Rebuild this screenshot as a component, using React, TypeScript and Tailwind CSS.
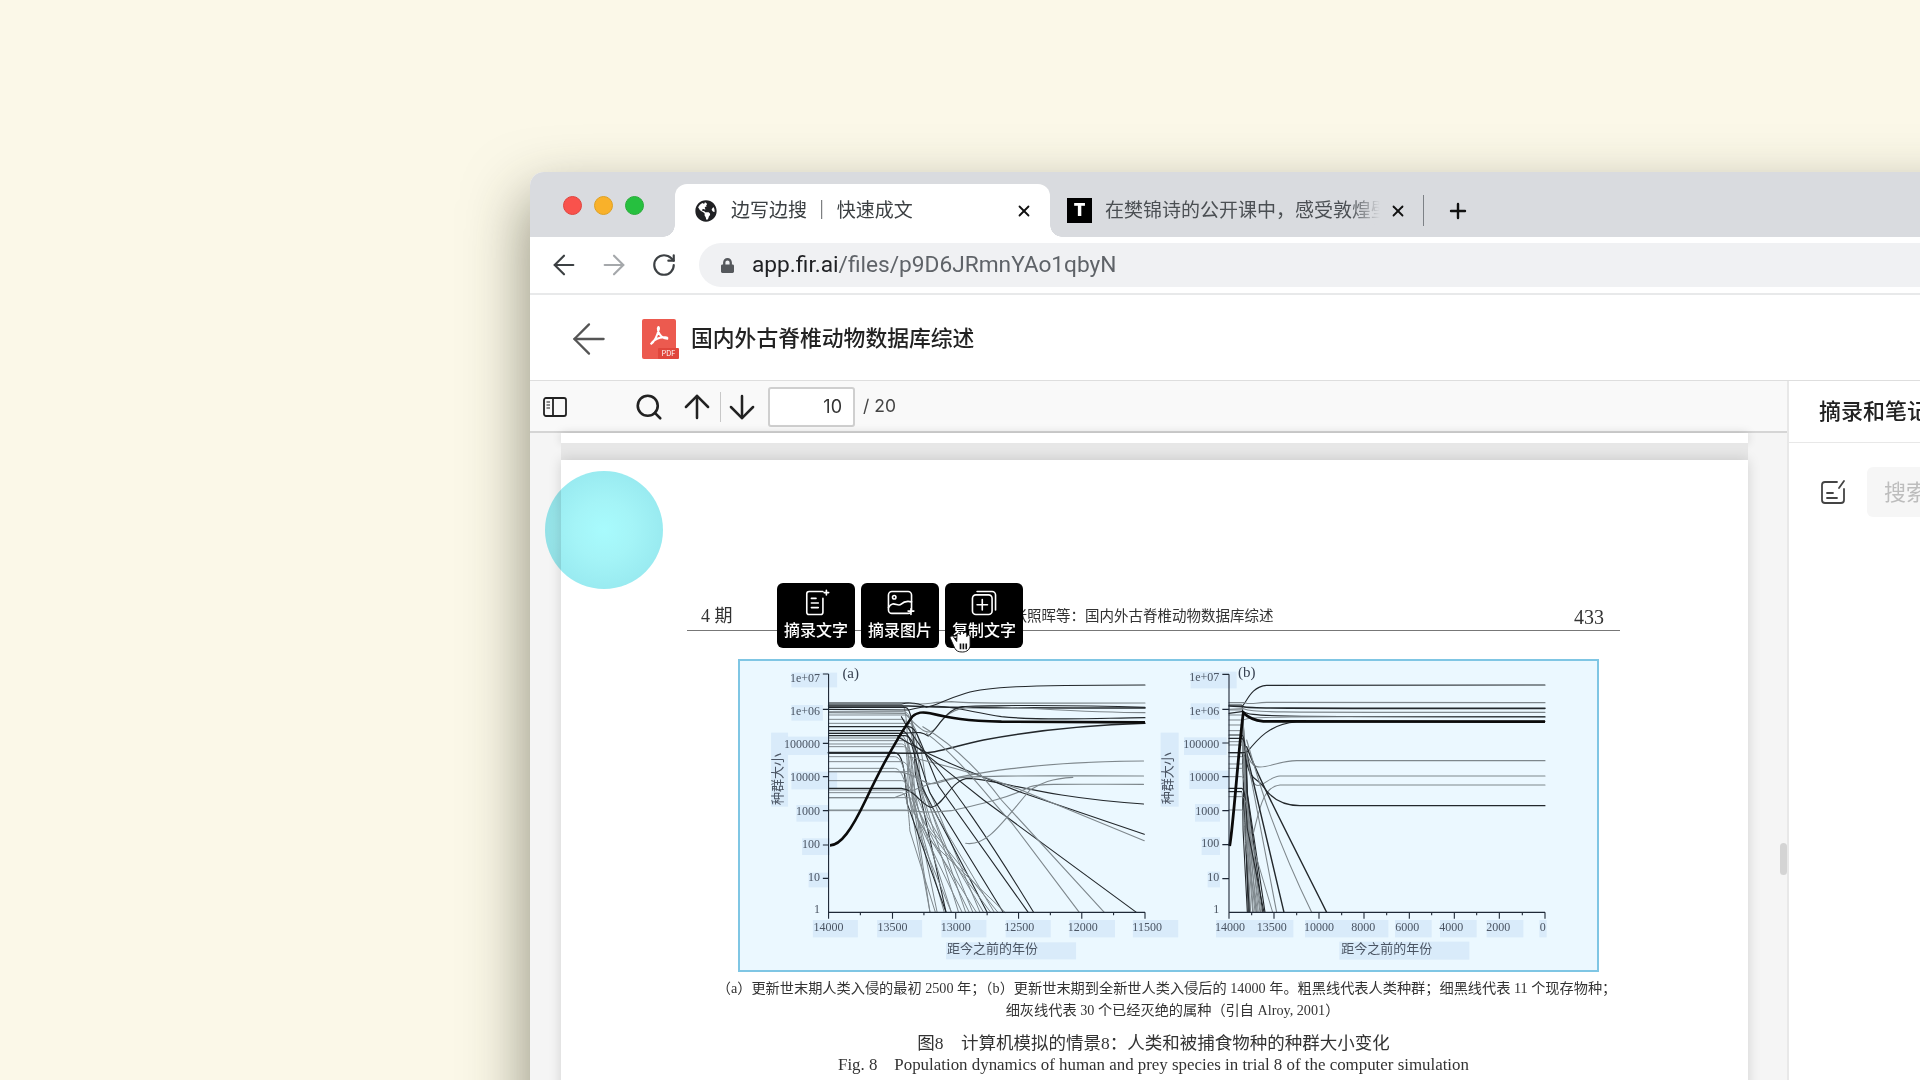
import { ArrowDown, ArrowLeft, ArrowRight, ArrowUp, Plus, RotateCw, Search, X } from "lucide-react";
import { FaGlobeAmericas, FaLock } from "react-icons/fa";

const serif = "font-['Liberation_Serif','Noto_Sans_CJK_SC',serif]";

// chart curves are written in the coordinates of the crop they were read from
const extinct = (y: number, xs: number, xe: number, base: number, bottom: number) => {
  const run = xe - xs;
  return `M${base} ${y} L${xs} ${y} C${xs + Math.min(22, run * 0.15)} ${y} ${xs + Math.min(30, run * 0.2)} ${y + 40} ${xs + run * 0.25} ${y + (bottom - y) * 0.32} L${xe} ${bottom}`;
};

const panelALines: { d: string; dark?: boolean; w?: number }[] = [
  { d: "M416 398 L640 398 C680 410 700 395 760 395 C800 400 900 400 1302 399" },
  { d: "M416 402 L620 402 C650 395 670 400 690 412 C720 405 740 390 800 370 C860 350 950 346 1302 345", dark: true },
  { d: "M416 408 L640 408 C720 412 780 414 1302 414", dark: true, w: 1.6 },
  { d: "M416 418 L640 420 C720 395 760 415 900 440 C1000 452 1150 445 1302 443", dark: true },
  { d: "M416 428 L630 430 C680 490 700 500 720 470 C740 440 760 415 820 410 C900 405 1100 428 1302 428" },
  { d: "M416 490 L610 490 C660 490 670 480 695 498 C720 480 740 420 790 410 C840 405 1100 405 1302 412", dark: true },
  { d: "M416 548 L650 550 C720 552 760 530 850 510 C1000 480 1150 465 1302 460", dark: true, w: 1.5 },
  { d: "M416 548 L600 548", dark: true, w: 2 },
  { d: "M416 605 L600 605 C660 605 680 650 720 640 C800 610 1000 575 1298 573" },
  { d: "M416 655 L620 655 C660 660 680 712 705 712 C740 705 760 625 810 625 C900 630 1000 680 1298 702", dark: true },
  { d: "M416 683 L600 683 C660 660 690 640 760 625 C850 615 1000 618 1298 618" },
  { d: "M416 720 L630 720 C670 725 690 730 760 722 C850 700 930 680 980 650 C1010 640 1100 643 1298 643" },
  { d: "M610 500 C700 560 800 600 950 665 L1300 793", dark: true },
  { d: "M640 560 C760 590 860 620 960 662 L1300 812" },
  { d: "M650 520 C720 580 780 630 850 690 L1278 1027", dark: true },
  { d: "M680 470 C760 520 830 590 900 690 L1188 1027" },
  { d: "M690 490 C780 560 860 680 930 760 L1118 1027" },
  { d: "M620 440 C680 560 760 620 990 1027", dark: true },
  { d: "M800 820 C860 830 900 760 980 660 C1010 640 1040 625 1100 622" },
];

const panelAFalls: [number, number, number, boolean?][] = [
  [405, 620, 700], [412, 630, 745, true], [425, 625, 780], [435, 630, 800], [448, 620, 820], [460, 640, 840],
  [482, 620, 860, true], [490, 610, 880], [497, 630, 905, true], [504, 620, 700], [512, 630, 720], [522, 620, 740],
  [530, 625, 760], [548, 600, 745, true], [560, 600, 790], [575, 620, 810], [595, 600, 830], [605, 640, 850],
  [632, 620, 870], [660, 640, 890], [668, 620, 715], [683, 640, 760], [722, 640, 910], [470, 640, 975, true],
];

const panelBLines: { d: string; dark?: boolean; w?: number }[] = [
  { d: "M335 200 C350 190 360 140 410 136 L1245 135", dark: true },
  { d: "M297 188 L345 188 C360 195 375 188 410 187 L1245 188" },
  { d: "M297 198 L340 200 C360 205 380 205 1245 205", dark: true, w: 1.6 },
  { d: "M297 208 L340 206 C370 218 400 217 1245 217" },
  { d: "M297 220 L340 214 C360 230 390 230 1245 230", dark: true },
  { d: "M340 240 C360 230 400 228 1245 232" },
  { d: "M297 338 L350 338 C380 300 420 250 500 246 L1245 244", dark: true },
  { d: "M350 335 C370 420 420 362 500 362 L1245 362" },
  { d: "M350 350 C370 500 400 410 450 408 L1245 408" },
  { d: "M370 580 C390 500 400 440 450 435 L1245 435" },
  { d: "M345 345 C360 430 380 410 400 440 C420 470 450 497 510 497 L1245 497", dark: true },
  { d: "M350 320 C380 400 430 500 590 817", dark: true, w: 1.4 },
  { d: "M350 300 C380 400 420 560 545 817" },
  { d: "M345 320 L462 817", dark: true, w: 1.4 },
  { d: "M345 320 L440 817" },
];

const panelBFalls: [number, number, number, boolean?][] = [
  [195, 335, 355, true], [210, 335, 362], [225, 335, 370], [240, 335, 378], [255, 335, 385], [272, 335, 392],
  [285, 335, 398, true], [295, 335, 405, true], [305, 335, 360], [315, 335, 368], [338, 335, 358, true], [350, 335, 375],
  [372, 335, 382], [385, 335, 390], [410, 335, 396], [445, 335, 402, true], [455, 335, 352, true], [470, 335, 428], [510, 335, 380],
];

const ax = (x: number) => x / 2.8 - 58;
const ay = (y: number) => y / 3 - 89;
const bx = (x: number) => x / 3 + 392;
const by = (y: number) => y / 3 - 19;

type Label = { t: string; x: number; y: number; r: [number, number, number, number]; end?: boolean };

const panelALabels: Label[] = [
  { t: "1e+07", x: 392, y: 325, r: [312, 308, 440, 352], end: true },
  { t: "1e+06", x: 392, y: 422, r: [312, 405, 400, 452], end: true },
  { t: "100000", x: 392, y: 522, r: [296, 500, 415, 555], end: true },
  { t: "10000", x: 392, y: 622, r: [312, 605, 440, 658], end: true },
  { t: "1000", x: 392, y: 722, r: [326, 705, 416, 755], end: true },
  { t: "100", x: 392, y: 822, r: [342, 805, 420, 855], end: true },
  { t: "10", x: 392, y: 922, r: [360, 908, 415, 952], end: true },
  { t: "1", x: 392, y: 1018, r: [0, 0, 0, 0], end: true },
  { t: "14000", x: 416, y: 1070, r: [372, 1050, 498, 1102] },
  { t: "13500", x: 595, y: 1070, r: [552, 1050, 678, 1102] },
  { t: "13000", x: 772, y: 1070, r: [732, 1050, 858, 1102] },
  { t: "12500", x: 950, y: 1070, r: [912, 1050, 1038, 1102] },
  { t: "12000", x: 1128, y: 1070, r: [1090, 1050, 1218, 1102] },
  { t: "11500", x: 1308, y: 1070, r: [1268, 1050, 1395, 1102] },
];

const panelBLabels: Label[] = [
  { t: "1e+07", x: 268, y: 112, r: [182, 95, 320, 145], end: true },
  { t: "1e+06", x: 268, y: 212, r: [182, 190, 270, 238], end: true },
  { t: "100000", x: 268, y: 312, r: [162, 292, 290, 345], end: true },
  { t: "10000", x: 268, y: 410, r: [178, 392, 297, 447], end: true },
  { t: "1000", x: 268, y: 512, r: [195, 492, 270, 545], end: true },
  { t: "100", x: 268, y: 610, r: [215, 592, 270, 645], end: true },
  { t: "10", x: 268, y: 712, r: [233, 695, 270, 742], end: true },
  { t: "1", x: 268, y: 808, r: [0, 0, 0, 0], end: true },
  { t: "14000", x: 300, y: 860, r: [258, 840, 490, 892] },
  { t: "13500", x: 425, y: 860, r: [0, 0, 0, 0] },
  { t: "10000", x: 567, y: 860, r: [525, 840, 775, 892] },
  { t: "8000", x: 700, y: 860, r: [0, 0, 0, 0] },
  { t: "6000", x: 832, y: 860, r: [795, 840, 905, 892] },
  { t: "4000", x: 964, y: 860, r: [930, 840, 1040, 892] },
  { t: "2000", x: 1105, y: 860, r: [1070, 840, 1180, 892] },
  { t: "0", x: 1238, y: 860, r: [1228, 840, 1250, 892] },
];

function ChartLabels({ items, fx, fy }: { items: Label[]; fx: (n: number) => number; fy: (n: number) => number }) {
  return (
    <>
      {items.map((l) =>
        l.r[2] > 0 ? (
          <rect key={`r${l.t}${l.x}`} x={fx(l.r[0])} y={fy(l.r[1])} width={fx(l.r[2]) - fx(l.r[0])} height={fy(l.r[3]) - fy(l.r[1])} fill="#d9ebfa" />
        ) : null,
      )}
      {items.map((l) => (
        <text key={`t${l.t}${l.x}`} x={fx(l.x)} y={fy(l.y) + 4} fontSize="12" fill="#4b5563" textAnchor={l.end ? "end" : "middle"}>
          {l.t}
        </text>
      ))}
    </>
  );
}

function Curves({ lines, falls, base, bottom }: { lines: { d: string; dark?: boolean; w?: number }[]; falls: [number, number, number, boolean?][]; base: number; bottom: number }) {
  return (
    <g fill="none" strokeLinecap="round">
      {falls.map(([y, xs, xe, dark]) => (
        <path key={`${y}-${xe}`} d={extinct(y, xs, xe, base, bottom)} stroke={dark ? "#23282c" : "#7e878c"} strokeWidth={dark ? 1.1 : 1} vectorEffect="non-scaling-stroke" />
      ))}
      {lines.map((l) => (
        <path key={l.d} d={l.d} stroke={l.dark ? "#23282c" : "#7e878c"} strokeWidth={l.w ?? 1.1} vectorEffect="non-scaling-stroke" />
      ))}
    </g>
  );
}

function Chart() {
  const axisColor = "#1f2937";
  const aTicks = [416, 595, 772, 948, 1125, 1302];
  const aMinor = [505, 683, 860, 1037, 1214];
  const bTicks = [297, 432, 567, 702, 838, 973, 1108, 1245];
  const bMinor = [365, 500, 635, 770, 905, 1040, 1177];
  const aY = [312, 418, 520, 620, 722, 825, 925];
  const bY = [103, 208, 309, 410, 512, 614, 716];
  return (
    <svg viewBox="2 2 857 309" className="block h-[313px] w-[861px] border-2 border-[#7fc6e4] bg-[#ebf8ff]">
      <g className={serif}>
        <rect x={ax(255)} y={ay(488)} width="17" height="74" fill="#d9ebfa" />
        <rect x={bx(92)} y={by(278)} width="18" height="74" fill="#d9ebfa" />
        <rect x={ax(745)} y={ay(1117)} width="130" height="17" fill="#d9ebfa" />
        <rect x={bx(628)} y={by(905)} width="130" height="18" fill="#d9ebfa" />

        <ChartLabels items={panelALabels} fx={ax} fy={ay} />
        <ChartLabels items={panelBLabels} fx={bx} fy={by} />

        <g transform="translate(-58 -89) scale(0.35714 0.33333)">
          <Curves lines={panelALines} falls={panelAFalls} base={416} bottom={1027} />
          <path d="M420 826 C450 826 480 780 520 690 C560 600 610 500 650 440 C665 425 680 425 700 430 C760 445 800 452 900 455 L1302 457" fill="none" stroke="#0b0b0b" strokeWidth="2.6" vectorEffect="non-scaling-stroke" />
          <path d={`M416 312 L416 1027 L1302 1027 ${aY.map((y) => `M400 ${y} L416 ${y}`).join(" ")} ${aTicks.map((x) => `M${x} 1027 L${x} 1046`).join(" ")} ${aMinor.map((x) => `M${x} 1027 L${x} 1036`).join(" ")}`} fill="none" stroke={axisColor} strokeWidth="1.1" vectorEffect="non-scaling-stroke" />
        </g>

        <g transform="translate(392 -19) scale(0.33333)">
          <Curves lines={panelBLines} falls={panelBFalls} base={297} bottom={817} />
          <path d="M299 618 C310 560 325 330 340 218 C350 228 365 240 400 244 L1245 245" fill="none" stroke="#0b0b0b" strokeWidth="2.8" vectorEffect="non-scaling-stroke" />
          <path d={`M297 103 L297 817 L1245 817 ${bY.map((y) => `M277 ${y} L297 ${y}`).join(" ")} ${bTicks.map((x) => `M${x} 817 L${x} 836`).join(" ")} ${bMinor.map((x) => `M${x} 817 L${x} 826`).join(" ")}`} fill="none" stroke={axisColor} strokeWidth="1.1" vectorEffect="non-scaling-stroke" />
        </g>

        <text x={ax(478)} y={ay(325)} fontSize="15" fill="#374151" textAnchor="middle">(a)</text>
        <text x={bx(350)} y={by(110)} fontSize="15" fill="#374151" textAnchor="middle">(b)</text>
        <text x={ax(875)} y={ay(1150)} fontSize="13" fill="#4b5563" textAnchor="middle">距今之前的年份</text>
        <text x={bx(770)} y={by(940)} fontSize="13" fill="#4b5563" textAnchor="middle">距今之前的年份</text>
        <text transform={`translate(${ax(285)} ${ay(627)}) rotate(-90)`} fontSize="13" fill="#4b5563" textAnchor="middle">种群大小</text>
        <text transform={`translate(${bx(125)} ${by(415)}) rotate(-90)`} fontSize="13" fill="#4b5563" textAnchor="middle">种群大小</text>
      </g>
    </svg>
  );
}

function PdfIcon() {
  return (
    <div className="relative h-[40px] w-[37px]">
      <div className="flex h-[40px] w-[34px] items-center justify-center rounded-[2px] bg-[#ec5a4f]">
        <svg viewBox="0 0 24 24" className="mb-[5px] h-[22px] w-[22px]" fill="none" stroke="#fff" strokeWidth="2.2">
          <path d="M3 21 C7 18 10 12 12 4 C12 1 10 2 11 6 C12 11 16 15 21 15 C22 13 17 13 13 14 C9 15 5 18 3 21 Z" />
        </svg>
      </div>
      <div className="absolute bottom-0 right-0 flex h-[11px] w-[21px] items-center justify-center rounded-[1px] bg-[#e0463c] text-[7px] leading-none text-white">PDF</div>
    </div>
  );
}

function ActionButton({ label, children }: { label: string; children: React.ReactNode }) {
  return (
    <div className="flex h-[65px] w-[78px] flex-col items-center rounded-[6px] bg-black pt-[5px] text-white">
      <svg viewBox="0 0 26 26" className="h-[30px] w-[30px]" fill="none" stroke="#fff" strokeWidth="1.4" strokeLinecap="round" strokeLinejoin="round">
        {children}
      </svg>
      <span className="mt-[2px] text-[16px] font-medium leading-[20px]">{label}</span>
    </div>
  );
}

export default function App() {
  return (
    <div className="h-[1080px] w-[1920px] overflow-hidden bg-[#fbf8e8] pl-[530px] pt-[172px] font-['Inter','Noto_Sans_CJK_SC',sans-serif]">
      <div className="h-[1000px] w-[1500px] rounded-tl-[14px] bg-white shadow-[-4px_24px_60px_rgba(50,50,30,0.5)]">
        {/* Tabs */}
        <div className="flex h-[65px] items-end rounded-tl-[14px] bg-[#d9dbdf]">
          <div className="flex h-[53px] w-[145px] items-start gap-[12px] pl-[33px] pt-[12px]">
            <div className="h-[19px] w-[19px] rounded-full border border-[#e0443e] bg-[#f9524c]" />
            <div className="h-[19px] w-[19px] rounded-full border border-[#dea123] bg-[#f9b12a]" />
            <div className="h-[19px] w-[19px] rounded-full border border-[#2aac3a] bg-[#26c03f]" />
          </div>
          <div className="relative flex h-[53px] w-[375px] items-center rounded-t-[12px] bg-white pl-[20px] pr-[17px] text-[#3c4043]">
            <div className="absolute -left-[12px] bottom-0 h-[12px] w-[12px] bg-[radial-gradient(circle_at_0_0,#d9dbdf_11.5px,#fff_12px)]" />
            <div className="absolute -right-[12px] bottom-0 h-[12px] w-[12px] bg-[radial-gradient(circle_at_100%_0,#d9dbdf_11.5px,#fff_12px)]" />
            <FaGlobeAmericas className="h-[22px] w-[22px] text-[#202124]" />
            <span className="ml-[14px] flex-1 pt-[1px] text-[19px]">边写边搜 ｜ 快速成文</span>
            <X className="h-[18px] w-[18px] text-[#111]" strokeWidth={2.4} />
          </div>
          <div className="flex h-[53px] items-center pl-[17px] text-[#4b4f53]">
            <div className="flex h-[25px] w-[25px] items-center justify-center bg-black text-[17px] font-black leading-none text-white">T</div>
            <div className="relative ml-[13px] w-[275px] overflow-hidden whitespace-nowrap pt-[1px] text-[19px]">
              在樊锦诗的公开课中，感受敦煌壁画的美
              <div className="absolute inset-y-0 right-0 w-[30px] bg-gradient-to-r from-transparent to-[#d9dbdf]" />
            </div>
            <X className="ml-[9px] h-[18px] w-[18px] text-[#111]" strokeWidth={2.4} />
            <div className="ml-[16px] h-[31px] w-px bg-[#7d8186]" />
            <Plus className="ml-[22px] h-[24px] w-[24px] text-[#111]" strokeWidth={2.4} />
          </div>
        </div>

        {/* Address bar */}
        <div className="flex h-[58px] items-center border-b-2 border-[#e8e9ea] pl-[18px]">
          <ArrowLeft className="h-[32px] w-[32px] text-[#3c4043]" strokeWidth={1.6} />
          <ArrowRight className="ml-[18px] h-[32px] w-[32px] text-[#a5a8ab]" strokeWidth={1.6} />
          <RotateCw className="ml-[21px] h-[26px] w-[26px] text-[#3c4043]" strokeWidth={2} />
          <div className="ml-[22px] flex h-[44px] flex-1 items-center rounded-l-full bg-[#f0f1f3] pl-[22px]">
            <FaLock className="h-[15px] w-[13px] text-[#55585c]" />
            <span className="ml-[18px] pt-[1px] font-['Roboto',sans-serif] text-[22.7px] text-[#202124]">
              app.fir.ai<span className="text-[#5f6368]">/files/p9D6JRmnYAo1qbyN</span>
            </span>
          </div>
        </div>

        {/* File header */}
        <div className="flex h-[86px] items-center border-b border-[#dedede] pl-[34px] pt-[2px]">
          <ArrowLeft className="h-[50px] w-[50px] text-[#555]" strokeWidth={1.1} />
          <div className="ml-[28px]">
            <PdfIcon />
          </div>
          <span className="ml-[12px] text-[21.8px] font-medium text-[#222]">国内外古脊椎动物数据库综述</span>
        </div>

        <div className="flex">
          {/* PDF viewer */}
          <div className="w-[1257px] shrink-0">
            <div className="flex h-[52px] items-center border-b-2 border-[#d5d5d5] bg-[#f9f9f9] pl-[13px] pt-[1px] text-[#333]">
              <svg viewBox="0 0 24 20" className="h-[20px] w-[24px]" fill="none" stroke="#222" strokeWidth="1.8">
                <rect x="1" y="1" width="22" height="18" rx="2" />
                <path d="M10 1 V19" />
                <path d="M3.5 5 H7 M3.5 8 H7 M3.5 11 H7" strokeWidth="1.2" />
              </svg>
              <Search className="ml-[67px] h-[30px] w-[30px] text-[#222]" strokeWidth={2.1} />
              <ArrowUp className="ml-[14px] h-[38px] w-[38px] text-[#222]" strokeWidth={1.6} />
              <div className="ml-[4px] h-[30px] w-px bg-[#c8c8c8]" />
              <ArrowDown className="ml-[2px] h-[38px] w-[38px] text-[#222]" strokeWidth={1.6} />
              <div className="ml-[7px] flex h-[40px] w-[87px] items-center justify-end rounded-[3px] border-2 border-[#cfcfcf] bg-white pr-[11px] text-[18px]">10</div>
              <span className="ml-[8px] text-[17.5px] text-[#444]">/ 20</span>
            </div>

            <div className="relative h-[700px] bg-[#f5f5f5] pl-[31px]">
              <div className="h-[10px] w-[1187px] bg-white shadow-[0_0_10px_rgba(0,0,0,0.15)]" />
              <div className="h-[17px] w-[1187px] bg-[#e7e7e7]" />
              <div className="h-[700px] w-[1187px] bg-white pl-[126px] pr-[128px] pt-[143px] shadow-[0_0_12px_rgba(0,0,0,0.15)]">
                <div className={`flex h-[28px] items-center border-b border-[#777] pl-[14px] pr-[16px] text-[#333] ${serif}`}>
                  <span className="text-[18px]">4 期</span>
                  <span className="ml-[280px] text-[14.5px]">张照晖等：国内外古脊椎动物数据库综述</span>
                  <span className="ml-auto text-[20px]">433</span>
                </div>
                <div className="ml-[51px] mt-[28px]">
                  <Chart />
                </div>
                <div className={`mt-[5px] whitespace-nowrap text-center text-[#333] ${serif}`}>
                  <p className="pl-[26px] text-[14.2px] leading-[22px]">（a）更新世末期人类入侵的最初 2500 年；（b）更新世末期到全新世人类入侵后的 14000 年。粗黑线代表人类种群；细黑线代表 11 个现存物种；</p>
                  <p className="pl-[38px] text-[14.2px] leading-[22px]">细灰线代表 30 个已经灭绝的属种（引自 Alroy, 2001）</p>
                  <p className="mt-[11px] text-[17.5px] leading-[22px]">图8　计算机模拟的情景8：人类和被捕食物种的种群大小变化</p>
                  <p className="text-[16.9px] leading-[22px]">Fig. 8　Population dynamics of human and prey species in trial 8 of the computer simulation</p>
                </div>
              </div>

              {/* click highlight */}
              <div className="absolute left-[15px] top-[38px] h-[118px] w-[118px] rounded-full bg-[radial-gradient(circle,#a8fbfd_0%,#a4f4f7_35%,#90e3eb_100%)] mix-blend-multiply" />

              {/* selection toolbar */}
              <div className="absolute left-[247px] top-[150px] flex gap-[6px]">
                <ActionButton label="摘录文字">
                  <path d="M19 3 H7 a2 2 0 0 0 -2 2 V21 a2 2 0 0 0 2 2 H17 a2 2 0 0 0 2 -2 V9" />
                  <path d="M9 9 H13 M9 13 H15 M9 17 H15 M22 2 V6 M20 4 H24" />
                </ActionButton>
                <ActionButton label="摘录图片">
                  <rect x="3" y="3" width="20" height="19" rx="3" />
                  <circle cx="8" cy="8" r="1.5" />
                  <path d="M3 17 C7 10 11 17 14 14 C16 12 19 11 23 12 M20 20 H25 M22.5 18 V23" />
                </ActionButton>
                <ActionButton label="复制文字">
                  <rect x="3" y="6" width="17" height="17" rx="3" />
                  <path d="M7 3 H20 a3 3 0 0 1 3 3 V19 M11.5 10 V19 M7 14.5 H16" />
                </ActionButton>
              </div>

              {/* hand cursor */}
              <svg viewBox="0 0 24 25" className="absolute left-[419px] top-[196px] h-[24px] w-[23px]" fill="#fff" stroke="#111" strokeWidth="1" strokeLinejoin="round">
                <path d="M8 13 L4.5 8 a1.8 1.8 0 0 0 -3 2 L6 20 C7.5 23 10 24 14 24 C19 24 22 21 22 17 V8 a1.7 1.7 0 0 0 -3.4 0 V5 a1.7 1.7 0 0 0 -3.4 0 V4 a1.7 1.7 0 0 0 -3.4 0 V6 a1.7 1.7 0 0 0 -3.4 0 Z" />
                <path d="M12 15 V21 M15 15 V21 M18 15 V21" strokeWidth="1.7" />
              </svg>

              {/* scrollbar thumb */}
              <div className="absolute left-[1250px] top-[410px] h-[32px] w-[7px] rounded-full bg-[#d4d4d4]" />
            </div>
          </div>

          {/* Notes panel */}
          <div className="min-w-0 flex-1 overflow-hidden border-l-2 border-[#e8e8e8]">
            <div className="flex h-[62px] items-center whitespace-nowrap border-b border-[#e8e8e8] pl-[30px] text-[22px] font-medium text-[#222]">摘录和笔记</div>
            <div className="flex items-center pl-[30px] pt-[24px]">
              <svg viewBox="0 0 28 28" className="h-[28px] w-[28px] shrink-0" fill="none" stroke="#444" strokeWidth="1.8" strokeLinecap="round">
                <path d="M18 4 H6 a3 3 0 0 0 -3 3 V22 a3 3 0 0 0 3 3 H22 a3 3 0 0 0 3 -3 V11" />
                <path d="M8 15 H14 M8 20 H18 M20 10 L25 3" />
              </svg>
              <div className="ml-[20px] flex h-[50px] min-w-[200px] items-center whitespace-nowrap rounded-[6px] bg-[#f6f6f6] pl-[17px] text-[22px] text-[#bdbdbd]">搜索摘录和笔记</div>
            </div>
          </div>
        </div>
      </div>
    </div>
  );
}
